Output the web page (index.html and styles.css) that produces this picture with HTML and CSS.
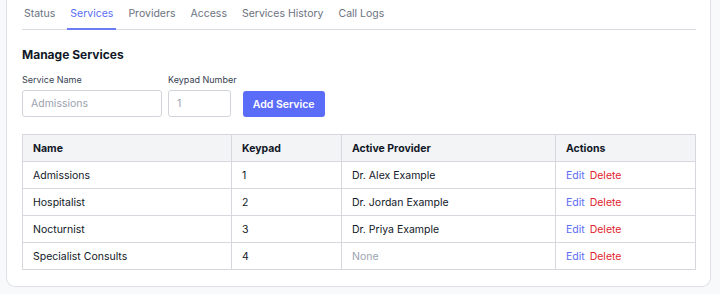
FILE: index.html
```html
<!DOCTYPE html>
<html lang="en">
<head>
  <meta charset="UTF-8" />
  <title>Services</title>
  <link rel="stylesheet" href="styles.css">
</head>
<body>

  <div class="card">
    <!-- Tabs -->
    <div class="tabs">
      <a class="tab">Status</a>
      <a class="tab active">Services</a>
      <a class="tab">Providers</a>
      <a class="tab">Access</a>
      <a class="tab">Services History</a>
      <a class="tab">Call Logs</a>
    </div>

    <h3 class="title">Manage Services</h3>

    <div class="form-row">
      <div class="field">
        <label>Service Name</label>
        <input type="text" class="input-name" placeholder="Admissions">
      </div>
      <div class="field">
        <label>Keypad Number</label>
        <input type="text" class="input-key" placeholder="1">
      </div>
      <button class="btn">Add Service</button>
    </div>

    <table class="services">
      <thead>
        <tr>
          <th class="col-name">Name</th>
          <th class="col-key">Keypad</th>
          <th class="col-prov">Active Provider</th>
          <th>Actions</th>
        </tr>
      </thead>
      <tbody>
        <tr>
          <td>Admissions</td>
          <td>1</td>
          <td>Dr. Alex Example</td>
          <td><a class="edit">Edit</a> <a class="del">Delete</a></td>
        </tr>
        <tr>
          <td>Hospitalist</td>
          <td>2</td>
          <td>Dr. Jordan Example</td>
          <td><a class="edit">Edit</a> <a class="del">Delete</a></td>
        </tr>
        <tr>
          <td>Nocturnist</td>
          <td>3</td>
          <td>Dr. Priya Example</td>
          <td><a class="edit">Edit</a> <a class="del">Delete</a></td>
        </tr>
        <tr>
          <td>Specialist Consults</td>
          <td>4</td>
          <td class="none">None</td>
          <td><a class="edit">Edit</a> <a class="del">Delete</a></td>
        </tr>
      </tbody>
    </table>
  </div>

</body>
</html>
```

FILE: styles.css
```css
body {
  font-family: Inter, "Noto Sans", sans-serif;
  background: #f8f9fb;
  margin: 0;
  padding: 0 9px 8px 6px;
  color: #111827;
}
.card {
  background: #fff;
  border: 1px solid #dfe1e6;
  border-top: none;
  border-radius: 0 0 9px 9px;
  padding: 0 14px 16px 15px;
}
.tabs {
  display: flex;
  gap: 11px;
  border-bottom: 1px solid #d9dbe0;
  height: 29px;
}
.tab {
  font-size: 10.5px;
  color: #6b7280;
  padding: 0 2px;
  line-height: 28px;
  border-bottom: 2px solid transparent;
  margin-bottom: -1px;
}
.tab.active {
  color: #5b6cf5;
  border-bottom-color: #6b7cf7;
  padding: 0 3px;
  margin: 0 -1px -1px;
}
.title {
  font-size: 12px;
  font-weight: 700;
  margin: 17px 0 12px;
}
.form-row {
  display: flex;
  align-items: flex-end;
  gap: 6px;
  margin-bottom: 17px;
}
.field {
  display: flex;
  flex-direction: column;
}
.field label {
  font-size: 9px;
  color: #374151;
  margin-bottom: 5px;
}
input {
  font-family: inherit;
  font-size: 10.5px;
  height: 27px;
  box-sizing: border-box;
  border: 1px solid #d1d5db;
  border-radius: 3px;
  padding: 0 8px;
  margin: 0;
}
input::placeholder {
  color: #9ca3af;
}
.input-name {
  width: 140px;
}
.input-key {
  width: 63px;
}
.btn {
  font-family: inherit;
  font-size: 10.5px;
  font-weight: 600;
  color: #fff;
  background: #5b6cf9;
  border: none;
  border-radius: 3px;
  height: 26px;
  padding: 0 10px;
}
.services {
  width: 100%;
  border-collapse: collapse;
  font-size: 10.5px;
}
.services th,
.services td {
  border: 1px solid #d6d8dd;
  text-align: left;
  height: 26px;
  padding: 0 10px;
}
.services th {
  background: #f3f4f6;
  font-weight: 700;
}
.col-name { width: 188px; }
.col-key { width: 89px; }
.col-prov { width: 193px; }
.none {
  color: #9ca3af;
}
.edit {
  color: #5b6cf5;
}
.del {
  color: #e11d2e;
  margin-left: 2px;
}
```
